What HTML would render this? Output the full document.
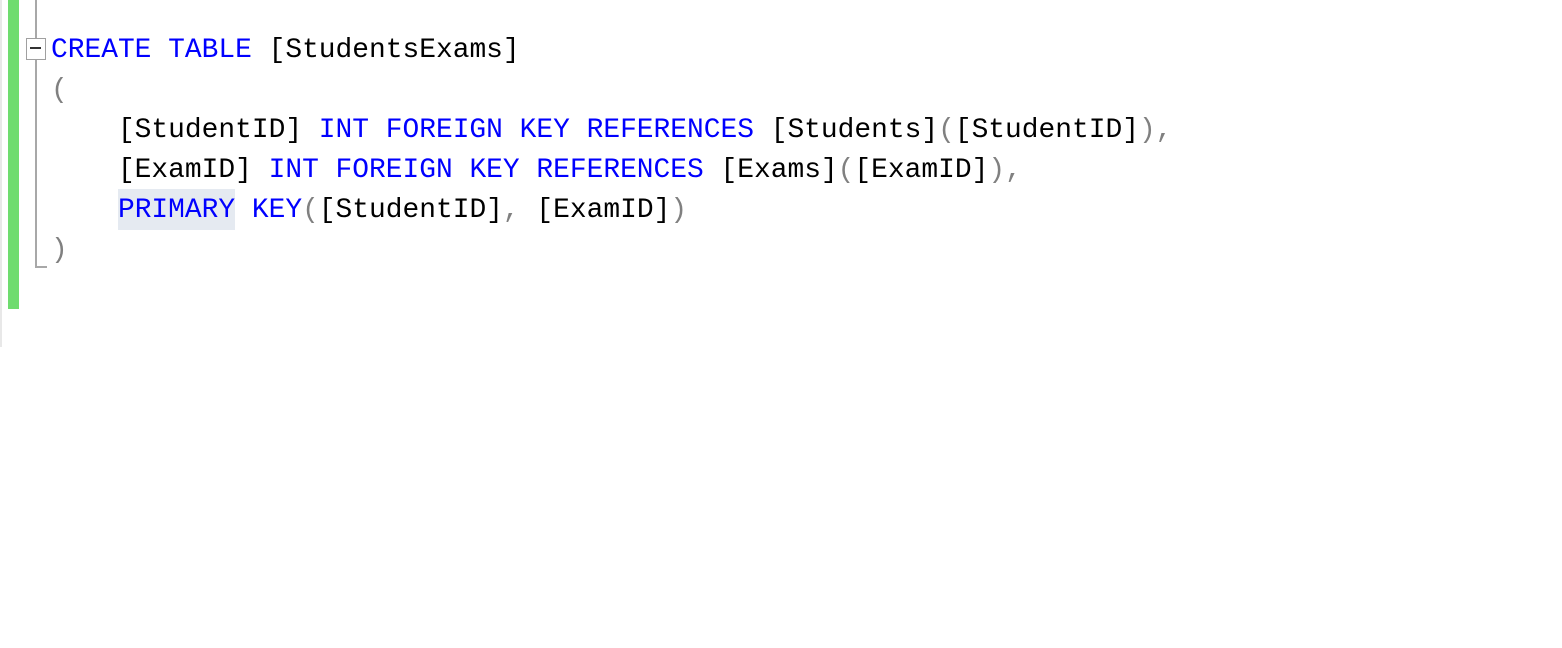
<!DOCTYPE html>
<html><head><style>
body{margin:0;width:1562px;height:648px;background:#fff;position:relative;overflow:hidden}
.l{position:absolute;left:51px;font-family:"Liberation Mono",monospace;font-size:27.9px;white-space:pre;color:#000;line-height:40px}
.k{color:#0000ff}.g{color:#808080}
</style></head><body>
<div style="position:absolute;left:0;top:0;width:2px;height:347px;background:#e8e8e8"></div>
<div style="position:absolute;left:8px;top:0;width:11px;height:309px;background:#6fdc6f"></div>
<div style="position:absolute;left:35px;top:0;width:2px;height:38px;background:#a8a8a8"></div>
<div style="position:absolute;left:26px;top:38px;width:18px;height:20px;border:1px solid #a0a0a0;background:#fff"></div>
<div style="position:absolute;left:30px;top:47px;width:11px;height:2px;background:#333"></div>
<div style="position:absolute;left:35px;top:60px;width:2px;height:208px;background:#a8a8a8"></div>
<div style="position:absolute;left:35px;top:266px;width:12px;height:2px;background:#a8a8a8"></div>
<div style="position:absolute;left:118px;top:189px;width:117px;height:41px;background:#e5eaf1"></div>
<div class="l" style="top:31px"><span class="k">CREATE TABLE</span> [StudentsExams]</div>
<div class="l" style="top:71px"><span class="g">(</span></div>
<div class="l" style="top:111px">    [StudentID] <span class="k">INT FOREIGN KEY REFERENCES</span> [Students]<span class="g">(</span>[StudentID]<span class="g">),</span></div>
<div class="l" style="top:151px">    [ExamID] <span class="k">INT FOREIGN KEY REFERENCES</span> [Exams]<span class="g">(</span>[ExamID]<span class="g">),</span></div>
<div class="l" style="top:191px">    <span class="k">PRIMARY KEY</span><span class="g">(</span>[StudentID]<span class="g">,</span> [ExamID]<span class="g">)</span></div>
<div class="l" style="top:231px"><span class="g">)</span></div>
</body></html>
